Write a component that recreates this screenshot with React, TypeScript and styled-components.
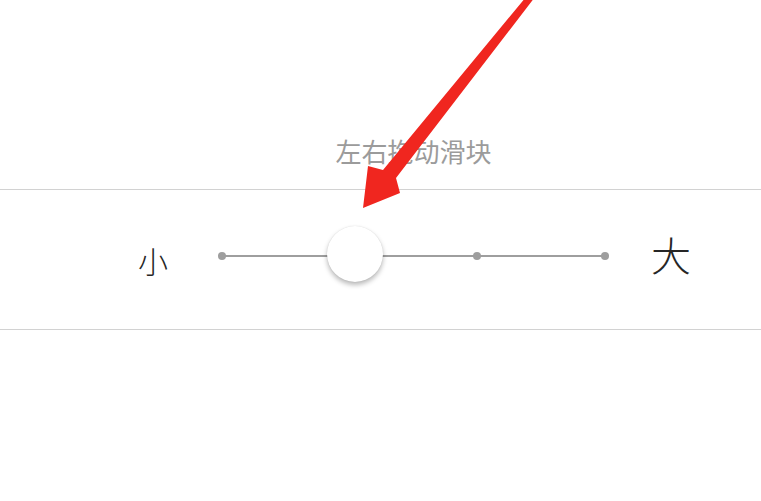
import React from 'react'
import styled, { createGlobalStyle } from 'styled-components'

const GlobalStyle = createGlobalStyle`
  html, body {
    margin: 0;
    padding: 0;
    background: #ffffff;
  }
  body {
    font-family: "Noto Sans CJK SC", "Noto Sans", sans-serif;
  }
`

const Page = styled.div`
  position: relative;
  width: 761px;
  height: 501px;
  overflow: hidden;
  background: #ffffff;
`

const Hint = styled.div`
  padding: 138px 0 25px 66px;
  text-align: center;
  font-size: 26px;
  line-height: 26px;
  color: #9b9b9b;
`

const Panel = styled.div`
  height: 139px;
  border-top: 1px solid #d2d2d2;
  border-bottom: 1px solid #d2d2d2;
  display: flex;
  align-items: center;
`

const SizeLabel = styled.span<{ $size: number; $offset: number }>`
  font-size: ${p => p.$size}px;
  font-weight: 300;
  line-height: 1;
  color: #262626;
  transform: translateY(${p => p.$offset}px);
`

const Track = styled.div`
  position: relative;
  width: 391px;
  height: 8px;
  display: flex;
  justify-content: space-between;
  align-items: center;
  margin: -7px 42px 0 50px;

  &::before {
    content: '';
    position: absolute;
    left: 4px;
    right: 4px;
    top: 3px;
    height: 2px;
    background: #9e9e9e;
  }
`

const Stop = styled.span`
  position: relative;
  width: 8px;
  height: 8px;
  border-radius: 50%;
  background: #9e9e9e;
`

const Thumb = styled.div<{ $left: number }>`
  position: absolute;
  left: ${p => p.$left}px;
  top: -26px;
  width: 56px;
  height: 56px;
  border-radius: 50%;
  background: #ffffff;
  box-shadow: 0 3px 5px rgba(0, 0, 0, 0.28), 0 0 1px rgba(0, 0, 0, 0.15);
`

const Pointer = styled.svg`
  position: absolute;
  left: 0;
  top: 0;
  pointer-events: none;
`

const stops = [0, 1, 2, 3]

const App = () => {
  return (
    <Page>
      <GlobalStyle />
      <Hint>左右拖动滑块</Hint>
      <Panel>
        <SizeLabel $size={30} $offset={0} style={{ marginLeft: 138 }}>小</SizeLabel>
        <Track>
          {stops.map(i => <Stop key={i} />)}
          <Thumb $left={109} />
        </Track>
        <SizeLabel $size={40} $offset={-6}>大</SizeLabel>
      </Panel>
      <Pointer width="761" height="501" viewBox="0 0 761 501">
        <polygon
          points="363,208 368,166 383,170 526,-3 535,-3 396,178 400,193"
          fill="#f0261f"
        />
      </Pointer>
    </Page>
  )
}

export default App
